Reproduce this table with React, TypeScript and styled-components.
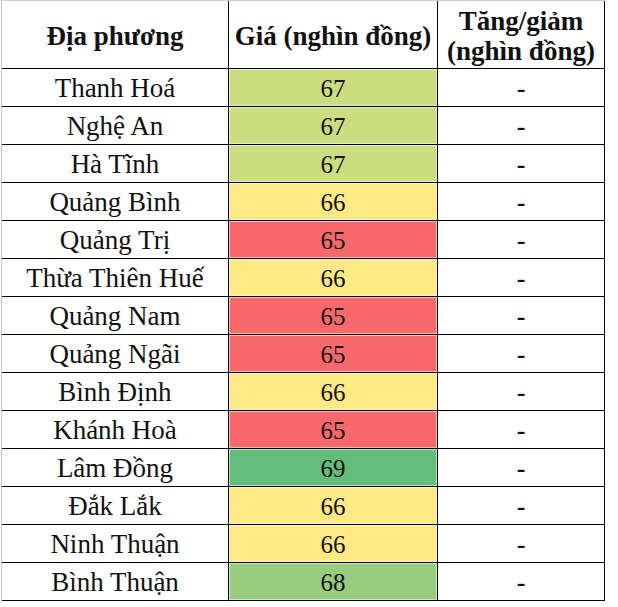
import { Fragment } from "react";
import styled, { createGlobalStyle } from "styled-components";

const GlobalStyle = createGlobalStyle`
  body {
    margin: 0;
    background: #fff;
    font-family: "Liberation Serif", "Times New Roman", serif;
    color: #111;
  }
`;

type Row = { place: string; price: number };

const rows: Row[] = [
  { place: "Thanh Hoá", price: 67 },
  { place: "Nghệ An", price: 67 },
  { place: "Hà Tĩnh", price: 67 },
  { place: "Quảng Bình", price: 66 },
  { place: "Quảng Trị", price: 65 },
  { place: "Thừa Thiên Huế", price: 66 },
  { place: "Quảng Nam", price: 65 },
  { place: "Quảng Ngãi", price: 65 },
  { place: "Bình Định", price: 66 },
  { place: "Khánh Hoà", price: 65 },
  { place: "Lâm Đồng", price: 69 },
  { place: "Đắk Lắk", price: 66 },
  { place: "Ninh Thuận", price: 66 },
  { place: "Bình Thuận", price: 68 },
];

// excel-like colour scale: 65 red -> 66 yellow -> 69 green
const scale: Record<number, string> = {
  65: "#f8696b",
  66: "#ffe985",
  67: "#cbdc81",
  68: "#98cd7f",
  69: "#63be7b",
};

const Sheet = styled.div`
  display: grid;
  grid-template-columns: 227px 209px 167px;
  grid-template-rows: 68px;
  grid-auto-rows: 38px;
  width: max-content;
  margin-left: 1px;
  border-left: 1px solid #c9c9c9;
  border-top: 1px solid #cfcfcf;
`;

const Cell = styled.div<{ $fill?: string }>`
  box-sizing: border-box;
  display: flex;
  align-items: center;
  justify-content: center;
  text-align: center;
  border-right: 1px solid #000;
  border-bottom: 1px solid #000;
  background: ${(p) => p.$fill || "#fff"};
  box-shadow: ${(p) => (p.$fill ? "inset 0 0 0 1px rgba(255,255,255,0.55)" : "none")};
  font-size: 27px;
  line-height: 1;
  padding-top: 2px;
  white-space: nowrap;
`;

const HeadCell = styled(Cell)`
  font-weight: bold;
  font-size: 27px;
  line-height: 30px;
  padding-top: 3px;
`;

const Price = styled(Cell)`
  font-size: 25px;
`;

const Dash = styled(Cell)`
  font-size: 26px;
  font-weight: bold;
`;

export default function App() {
  return (
    <>
      <GlobalStyle />
      <Sheet>
        <HeadCell>Địa phương</HeadCell>
        <HeadCell>Giá (nghìn đồng)</HeadCell>
        <HeadCell>
          Tăng/giảm
          <br />
          (nghìn đồng)
        </HeadCell>
        {rows.map((r) => (
          <Fragment key={r.place}>
            <Cell>{r.place}</Cell>
            <Price $fill={scale[r.price]}>{r.price}</Price>
            <Dash>-</Dash>
          </Fragment>
        ))}
      </Sheet>
    </>
  );
}
